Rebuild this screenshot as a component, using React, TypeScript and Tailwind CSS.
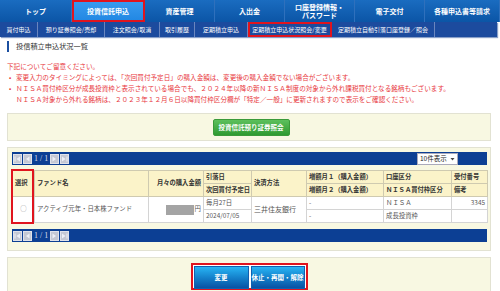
import React from "react";

const navItems = [
  { label: "トップ", w: "w-[72px]" },
  { label: "投資信託申込", w: "w-[73px]", active: true },
  { label: "資産管理", w: "w-[70px]" },
  { label: "入出金", w: "w-[70px]" },
  { label: "口座登録情報・\nパスワード", w: "w-[70px]" },
  { label: "電子交付", w: "w-[70px]" },
  { label: "各種申込書等請求", w: "w-[75px]" },
];

const subItems = [
  { label: "買付申込", w: "w-[38px]" },
  { label: "預り証券照会/売却", w: "w-[67px]" },
  { label: "注文照会/取消", w: "w-[55px]" },
  { label: "取引履歴", w: "w-[35px]" },
  { label: "定期積立申込", w: "w-[53px]" },
  { label: "定期積立申込状況照会/変更", w: "w-[84px]", active: true },
  { label: "定期積立自動引落口座登録／照会", w: "w-[103px]" },
];

function PagerIcon({ dir, bar }: { dir: "l" | "r"; bar?: boolean }) {
  return (
    <span className="flex h-[10px] w-[9px] items-center justify-center bg-[#c4c8d4] border border-[#dfe2ea]">
      <svg width="7" height="6" viewBox="0 0 7 6">
        {dir === "l" ? (
          <>
            {bar && <rect x="0.5" y="0.5" width="1" height="5" fill="#eef0f6" />}
            <polygon points={bar ? "6,0.5 2.5,3 6,5.5" : "5.5,0.5 2,3 5.5,5.5"} fill="#eef0f6" />
          </>
        ) : (
          <>
            <polygon points={bar ? "1,0.5 4.5,3 1,5.5" : "1.5,0.5 5,3 1.5,5.5"} fill="#eef0f6" />
            {bar && <rect x="5.5" y="0.5" width="1" height="5" fill="#eef0f6" />}
          </>
        )}
      </svg>
    </span>
  );
}

function Pager({ withSelect }: { withSelect?: boolean }) {
  return (
    <div className="flex h-[13px] items-center bg-[#0c3f94] pl-[1px] pr-[29px]">
      <div className="flex items-center gap-[1px]">
        <PagerIcon dir="l" bar />
        <PagerIcon dir="l" />
        <span className="px-[1px] font-['Liberation_Serif',serif] text-[8px] leading-none text-[#d8dcea]">1 / 1</span>
        <PagerIcon dir="r" />
        <PagerIcon dir="r" bar />
      </div>
      {withSelect && (
        <div className="ml-auto flex h-[12px] w-[41px] items-center justify-between border border-[#aab] bg-white pl-[2px] pr-[2px] text-[6.5px] leading-none text-[#222]">
          <span>10件表示</span>
          <svg width="5" height="4" viewBox="0 0 5 4">
            <polygon points="0.5,1 4.5,1 2.5,3.5" fill="#444" />
          </svg>
        </div>
      )}
    </div>
  );
}

export default function App() {
  const th =
    "border border-[#cfcab0] bg-[#fbf3c9] px-[2px] py-0 text-left font-bold text-[6.3px] leading-none text-[#333] h-[13px] whitespace-nowrap overflow-hidden";
  const td =
    "border border-[#d4d4d4] bg-white px-[2px] py-0 text-[6.4px] leading-none text-[#555] h-[13px] whitespace-nowrap overflow-hidden";
  return (
    <div className="relative h-[291px] w-[500px] overflow-hidden bg-white font-['Noto_Sans_CJK_JP',sans-serif]">
      {/* top nav */}
      <div className="flex h-[22px] bg-gradient-to-b from-[#1a6cc0] to-[#0b55a6]">
        {navItems.map((n) => (
          <div
            key={n.label}
            className={`${n.w} relative flex items-center justify-center border-r border-[#2f70bc] text-center text-[7px] font-bold leading-[8px] whitespace-pre text-white ${
              n.active ? "bg-gradient-to-b from-[#3a9cf0] to-[#1f86e2] outline outline-2 -outline-offset-2 outline-[#e0141e]" : ""
            }`}
          >
            {n.label}
          </div>
        ))}
      </div>
      {/* sub nav */}
      <div className="flex h-[15px] w-[497px] bg-[#1c4b9e] shadow-[1px_1px_1px_#8aa0c8]">
        {subItems.map((s) => (
          <div
            key={s.label}
            className={`${s.w} flex items-center justify-center whitespace-nowrap border-r border-[#6a86be] text-[6px] leading-none text-white ${
              s.active ? "outline outline-2 -outline-offset-2 outline-[#e0141e]" : ""
            }`}
          >
            {s.label}
          </div>
        ))}
      </div>
      {/* title */}
      <div className="ml-[7px] mt-[4px] flex h-[11px] items-center">
        <span className="h-[11px] w-[2px] bg-[#1b4fa0]" />
        <span className="ml-[7px] text-[7.2px] leading-none text-[#333]">投信積立申込状況一覧</span>
      </div>
      {/* notes */}
      <div className="ml-[7px] mt-[9px] text-[6.6px] leading-[11px] text-[#e8383d]">
        <p>下記についてご留意ください。</p>
        <div className="flex">
          <span className="w-[9px] pl-[2px]">•</span>
          <span>変更入力のタイミングによっては、「次回買付予定日」の購入金額は、変更後の購入金額でない場合がございます。</span>
        </div>
        <div className="flex">
          <span className="w-[9px] pl-[2px]">•</span>
          <span>ＮＩＳＡ買付枠区分が成長投資枠と表示されている場合でも、２０２４年以降の新ＮＩＳＡ制度の対象から外れ課税買付となる銘柄もございます。</span>
        </div>
        <div className="pl-[9px]">ＮＩＳＡ対象から外れる銘柄は、２０２３年１２月６日以降買付枠区分欄が「特定／一般」に更新されますので表示をご確認ください。</div>
      </div>
      {/* box 1 */}
      <div className="ml-[7px] mt-[8px] flex h-[28px] w-[484px] items-center justify-center border border-[#e2e2d2] bg-[#f8f8e2] pl-[4px]">
        <div className="flex h-[17px] w-[77px] items-center justify-center rounded-[2px] border border-[#3a9a3a] bg-gradient-to-b from-[#5cc05c] to-[#2e9a30] text-[6.5px] font-bold leading-none text-white">
          投資信託預り証券照会
        </div>
      </div>
      {/* box 2 */}
      <div className="ml-[7px] mt-[6px] h-[104px] w-[484px] border border-[#e2e2d2] bg-[#f8f8e2] pl-[4px] pr-[3px] pt-[4px]">
        <Pager withSelect />
        <div className="relative mt-[5px]">
          <table className="w-[475px] table-fixed border-collapse">
            <colgroup>
              <col className="w-[22px]" />
              <col className="w-[114px]" />
              <col className="w-[55px]" />
              <col className="w-[48px]" />
              <col className="w-[55px]" />
              <col className="w-[77px]" />
              <col className="w-[68px]" />
              <col className="w-[36px]" />
            </colgroup>
            <tbody>
              <tr>
                <th rowSpan={2} className={th}>選択</th>
                <th rowSpan={2} className={th}>ファンド名</th>
                <th rowSpan={2} className={`${th} text-right`}>月々の購入金額</th>
                <th className={`${th} px-[1px]`}>引落日</th>
                <th rowSpan={2} className={th}>決済方法</th>
                <th className={th}>増額月１（購入金額）</th>
                <th className={th}>口座区分</th>
                <th className={th}>受付番号</th>
              </tr>
              <tr>
                <th className={`${th} px-[1px]`}>次回買付予定日</th>
                <th className={th}>増額月２（購入金額）</th>
                <th className={th}>ＮＩＳＡ買付枠区分</th>
                <th className={th}>備考</th>
              </tr>
              <tr>
                <td rowSpan={2} className={`${td} text-center text-[#999]`}>○</td>
                <td rowSpan={2} className={td}>アクティブ元年・日本株ファンド</td>
                <td rowSpan={2} className={td}>
                  <div className="flex items-center justify-end gap-[1px]">
                    <span className="h-[10px] w-[28px] bg-[#a4a4a4]" />
                    <span>円</span>
                  </div>
                </td>
                <td className={td}>毎月27日</td>
                <td rowSpan={2} className={`${td} text-[7px] text-[#6a3fc8]`}>三井住友銀行</td>
                <td className={td}>-</td>
                <td className={td}>ＮＩＳＡ</td>
                <td className={`${td} text-right text-[#6a3fc8]`}>3345</td>
              </tr>
              <tr>
                <td className={td}>2024/07/05</td>
                <td className={td}>-</td>
                <td className={td}>成長投資枠</td>
                <td className={td}></td>
              </tr>
            </tbody>
          </table>
          <div className="pointer-events-none absolute -left-[1px] -top-[1px] h-[55px] w-[23px] border-2 border-[#e0141e]" />
        </div>
        <div className="mt-[6px]">
          <Pager />
        </div>
      </div>
      {/* box 3 */}
      <div className="ml-[7px] mt-[6px] flex h-[40px] w-[484px] justify-center border border-[#e2e2d2] bg-[#f8f8e2] pt-[5px]">
        <div className="flex h-[27px] border-2 border-[#e0141e] bg-white p-[1px]">
          <div className="flex h-[23px] w-[55px] items-center justify-center border border-[#1060b0] bg-gradient-to-b from-[#28b4f4] to-[#0a52a4] text-[6.5px] font-bold leading-none text-white">
            変更
          </div>
          <div className="ml-[2px] flex h-[23px] w-[54px] items-center justify-center border border-[#1060b0] bg-gradient-to-b from-[#28b4f4] to-[#0a52a4] text-[6.5px] font-bold leading-none text-white">
            休止・再開・解除
          </div>
        </div>
      </div>
    </div>
  );
}
